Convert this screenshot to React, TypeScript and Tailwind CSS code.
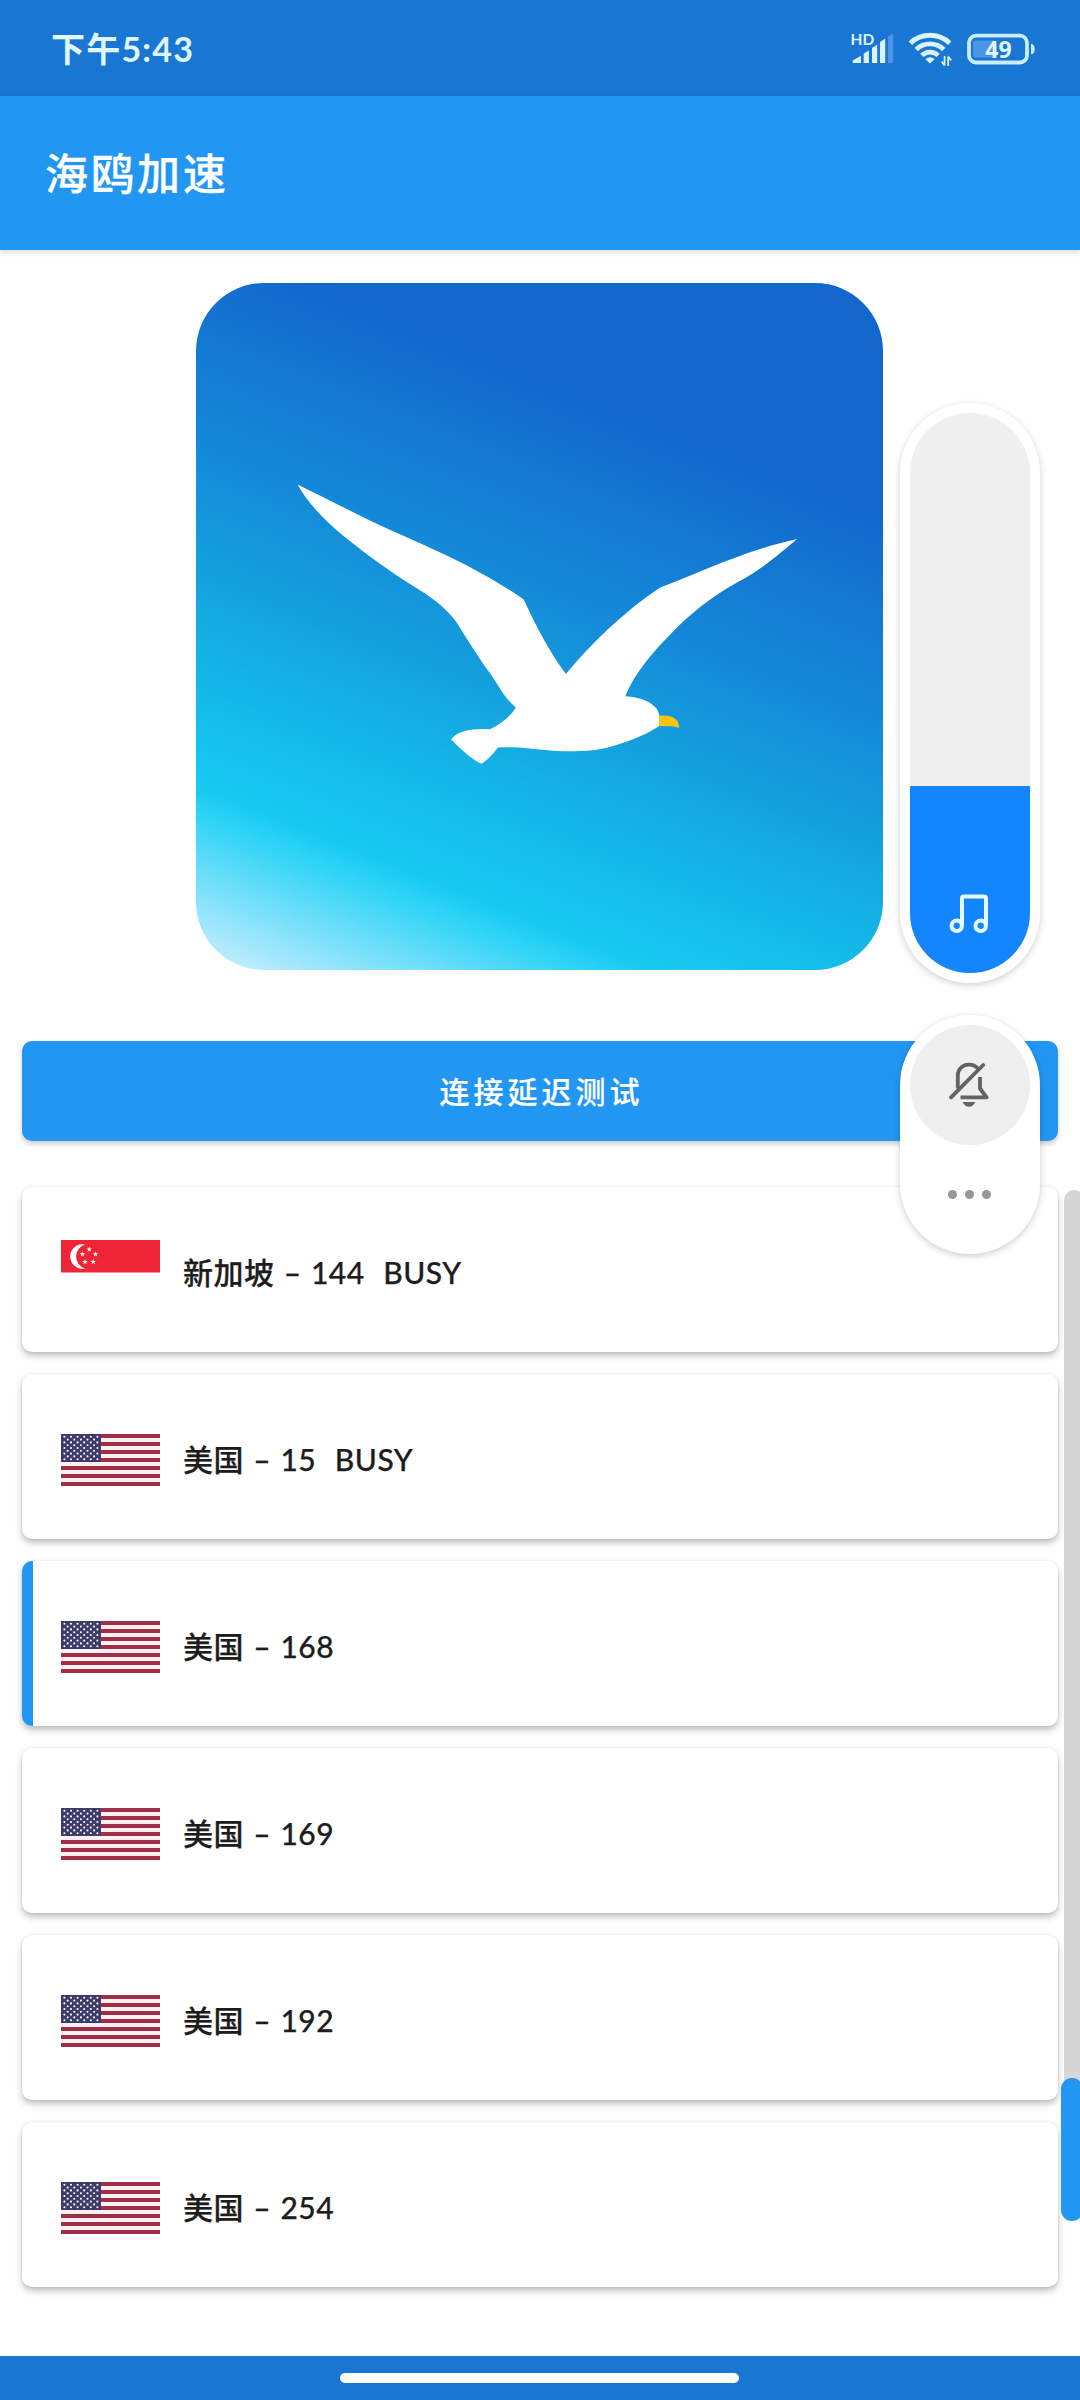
import React from 'react'

interface IServer {
  country: 'sg' | 'us'
  name: string
  active?: boolean
}

const servers: IServer[] = [
  { country: 'sg', name: '新加坡 – 144  BUSY' },
  { country: 'us', name: '美国 – 15  BUSY' },
  { country: 'us', name: '美国 – 168', active: true },
  { country: 'us', name: '美国 – 169' },
  { country: 'us', name: '美国 – 192' },
  { country: 'us', name: '美国 – 254' },
]

const SignalIcon = () => (
  <svg width="46" height="46" viewBox="848 25 46 46" fill="#d9f3ff">
    <text
      x="850.5"
      y="43.6"
      fontSize="15.5"
      fontWeight="700"
      fontFamily="Lato, sans-serif"
    >
      HD
    </text>
    <path d="M852.7 62v-2.6l8.3-4.6V62z" />
    <path d="M863.7 62V52.6l5.2-3.2V62z" />
    <path d="M872 62V47l5.2-3.6V62z" />
    <path d="M880 62V41l5.2-3.4V62z" />
    <path d="M888 62V35.8l5.2-3V62z" fill="#4c94e4" />
  </svg>
)

const WifiIcon = () => (
  <svg width="44" height="36" viewBox="908 31 44 36" fill="none" stroke="#d9f3ff">
    <path d="M910.3 43.2a28.5 28.5 0 0 1 39.4 0" strokeWidth="5" />
    <path d="M916.2 49.4a20 20 0 0 1 27.6 0" strokeWidth="4.8" />
    <path d="M921.8 55.4a12 12 0 0 1 16.4 0" strokeWidth="4.6" />
    <path d="M930 63.4l-4.6-4.2a6.4 6.4 0 0 1 9.2 0z" fill="#d9f3ff" stroke="none" />
    <path d="M944.6 56v9.5m0 0l-3-4M948.2 66v-9.5m0 0l3 4" strokeWidth="1.8" />
  </svg>
)

const BatteryIcon = () => (
  <svg width="70" height="32" viewBox="966 32 70 32">
    <rect x="973" y="39.5" width="24" height="17" rx="2" fill="#4c94e4" />
    <rect
      x="969"
      y="34.7"
      width="58"
      height="26.8"
      rx="7"
      fill="none"
      stroke="#c9efff"
      strokeWidth="3.8"
    />
    <path d="M1031 42.7c5 0 5 10.6 0 10.6z" fill="#c9efff" />
    <text
      x="998.5"
      y="56.6"
      textAnchor="middle"
      fontSize="23"
      fontWeight="700"
      fontFamily="'Open Sans', sans-serif"
      fill="#e2f7ff"
    >
      49
    </text>
  </svg>
)

const Seagull = () => (
  <svg
    className="h-full w-full"
    viewBox="35 48 1495 1476"
    preserveAspectRatio="none"
    fill="#fff"
  >
    <path d="M256 481C320 512 390 548 454 577C540 615 600 640 650 669C690 690 730 715 748 728C772 778 800 835 840 888C895 822 965 755 1045 702C1130 672 1220 625 1343 598C1310 625 1265 665 1215 690C1170 715 1130 742 1080 790C1030 840 990 885 969 936C1010 938 1042 955 1043 978V1000C1010 1022 950 1045 900 1052C860 1055 830 1055 800 1052C760 1048 730 1044 692 1046C680 1062 668 1074 656 1081C630 1068 610 1048 590 1028C605 1010 640 1004 675 1007C700 995 720 978 731 960C705 940 690 905 670 880C645 845 620 805 600 774C570 735 530 712 490 688C440 655 390 620 340 578C305 548 275 515 256 481Z" />
    <path
      d="M1043 978C1068 975 1088 984 1086 1004C1072 998 1060 1001 1042 1000Z"
      fill="#fcc40c"
    />
  </svg>
)

const MusicIcon = () => (
  <svg
    className="mr-0.5"
    width="40"
    height="40"
    viewBox="949 893.5 40 40"
    fill="none"
    stroke="#e6fbff"
    strokeWidth="4"
  >
    <circle cx="956.7" cy="925.3" r="5.2" />
    <circle cx="980.7" cy="925.3" r="5.2" />
    <path d="M962 925v-27q0-2 2-2h20q2 0 2 2v27" />
  </svg>
)

const BellOffIcon = () => (
  <svg
    className="mr-0.5"
    width="40"
    height="46"
    viewBox="949 1062 40 46"
    fill="none"
    stroke="#636363"
    strokeWidth="3.8"
    strokeLinecap="round"
    strokeLinejoin="round"
  >
    <path d="M957.8 1087v-11.5c0-6.5 5-10.8 11.2-10.8 3.6 0 6.6 1.3 8.6 3.6" />
    <path d="M951 1097.4l32.2-32.4" />
    <path d="M980 1077v11.5l6.6 8.8h-26.1" strokeLinecap="butt" />
    <path d="M962.7 1102h12.6c-2 6.4-10.6 6.4-12.6 0z" fill="#636363" stroke="none" />
  </svg>
)

const SingaporeFlag = () => (
  <svg className="mt-px" width="99" height="66" viewBox="0 0 99 66">
    <rect width="99" height="66" fill="#fff" />
    <rect width="99" height="32.5" fill="#ee2536" />
    <path d="M24 4.6a12.2 12.2 0 1 0 0 23.8a12.4 12.4 0 0 1 0-23.8z" fill="#fff" />
    {[
      [28.2, 9.4],
      [21.5, 14.2],
      [34.6, 14.2],
      [24, 22],
      [32.2, 22],
    ].map(([x, y]) => (
      <path
        key={`${x}-${y}`}
        transform={`translate(${x} ${y})`}
        d="M0-2.8L.7-.9H2.7L1.1.4 1.7 2.3 0 1.1-1.7 2.3-1.1.4-2.7-.9H-.7z"
        fill="#fff"
      />
    ))}
  </svg>
)

const UsFlag = () => (
  <svg className="mt-px" width="99" height="52" viewBox="0 0 99 52">
    <rect width="99" height="52" fill="#fff0f1" />
    {[0, 1, 2, 3, 4, 5, 6].map((row) => (
      <rect key={row} y={row * 8} width="99" height="4" fill="#a02e48" />
    ))}
    <rect width="40" height="28" fill="#3c3b6a" />
    {[0, 1, 2, 3, 4, 5, 6, 7, 8].map((row) =>
      [0, 1, 2, 3, 4, 5].slice(row % 2).map((col) => (
        <circle
          key={`${row}-${col}`}
          cx={3.4 + col * 6.6 - (row % 2) * 3.3}
          cy={2.8 + row * 2.8}
          r="1.05"
          fill="#fff"
        />
      ))
    )}
  </svg>
)

const ServerCard: React.FC<IServer> = ({ country, name, active }) => (
  <div className="flex h-[165px] shrink-0 overflow-hidden rounded-[10px] bg-white shadow-[0_4px_6px_rgba(0,0,0,0.24),0_0_3px_rgba(0,0,0,0.08)]">
    <div className={active ? 'w-[11px] bg-[#2196f3]' : 'w-[11px]'} />
    <div className="flex items-center pt-[5px] pl-7">
      {country === 'sg' ? <SingaporeFlag /> : <UsFlag />}
      <span className="ml-[23px] whitespace-pre text-[30px] leading-10 font-medium tracking-[0.5px] text-[#1d1d1d] [-webkit-text-stroke:0.25px_#1d1d1d] [word-spacing:1.2px]">
        {name}
      </span>
    </div>
  </div>
)

const VolumePanel = () => (
  <div className="absolute top-[403px] right-10 flex w-[140px] flex-col gap-8">
    <div className="h-[580px] rounded-full bg-white p-2.5 shadow-[0_2px_6px_rgba(0,0,0,0.18)]">
      <div className="flex h-full flex-col justify-end overflow-hidden rounded-full bg-[#f0f0f0]">
        <div className="flex h-[187px] items-end justify-center bg-[#1285ff] pb-[39px]">
          <MusicIcon />
        </div>
      </div>
    </div>
    <div className="flex h-[239px] flex-col items-center rounded-full bg-white p-2.5 shadow-[0_2px_6px_rgba(0,0,0,0.2)]">
      <div className="flex h-[120px] w-[120px] items-center justify-center rounded-full bg-[#efefef]">
        <BellOffIcon />
      </div>
      <div className="mt-[45px] mr-0.5 flex gap-2">
        <span className="h-[9px] w-[9px] rounded-full bg-[#969696]" />
        <span className="h-[9px] w-[9px] rounded-full bg-[#969696]" />
        <span className="h-[9px] w-[9px] rounded-full bg-[#969696]" />
      </div>
    </div>
  </div>
)

const App = () => {
  return (
    <div className="relative flex h-[2400px] w-[1080px] flex-col overflow-hidden bg-[#fefefe] font-[Lato,'Noto_Sans_CJK_SC',sans-serif]">
      <div className="flex h-24 shrink-0 items-center justify-between bg-[#1976d2] pt-px pr-11 pl-[51px]">
        <span className="text-[34px] leading-none font-bold tracking-[1.2px] text-[#e0f6ff]">
          下午5:43
        </span>
        <div className="flex items-center gap-3.5">
          <SignalIcon />
          <WifiIcon />
          <BatteryIcon />
        </div>
      </div>

      <header className="flex h-[154px] shrink-0 items-center bg-[#2196f3] pl-[45px] shadow-[0_2px_5px_rgba(0,0,0,0.15)]">
        <h1 className="text-[43px] leading-none font-medium tracking-[3px] text-white [-webkit-text-stroke:0.3px_#fff]">
          海鸥加速
        </h1>
      </header>

      <div className="mt-[33px] ml-[196px] h-[687px] w-[687px] shrink-0 overflow-hidden rounded-[68px] bg-[linear-gradient(202deg,#1266cc_0%,#1266cc_23%,#1474d0_32%,#1488d8_45%,#149edc_57%,#14bcea_72%,#18caf2_81%,#30d4f6_84%,#c0ecfe_98%)]">
        <Seagull />
      </div>

      <button className="mx-[22px] mt-[71px] flex h-[100px] shrink-0 items-center justify-center rounded-[10px] bg-[#2196f3] pl-[3px] text-[30px] font-medium tracking-[4px] text-white shadow-[0_3px_5px_rgba(0,0,0,0.2)] [-webkit-text-stroke:0.2px_#fff]">
        连接延迟测试
      </button>

      <div className="mt-[46px] flex gap-[3px] pl-[22px]">
        <div className="flex w-[1036px] shrink-0 flex-col gap-[22px]">
          {servers.map((server) => (
            <ServerCard key={server.name} {...server} />
          ))}
        </div>
        <div className="flex w-[22px] shrink-0 flex-col pt-[3px]">
          <div className="ml-[3px] -mb-3 h-[900px] w-5 shrink-0 rounded-t-[10px] bg-[#d6d6d6]" />
          <div className="h-[143px] shrink-0 rounded-full bg-[#2196f3]" />
        </div>
      </div>

      <div className="mt-auto flex h-11 shrink-0 justify-center bg-[#1976d2] pt-[17px] pr-0.5">
        <div className="h-2.5 w-[399px] rounded-full bg-white" />
      </div>

      <VolumePanel />
    </div>
  )
}

export default App
